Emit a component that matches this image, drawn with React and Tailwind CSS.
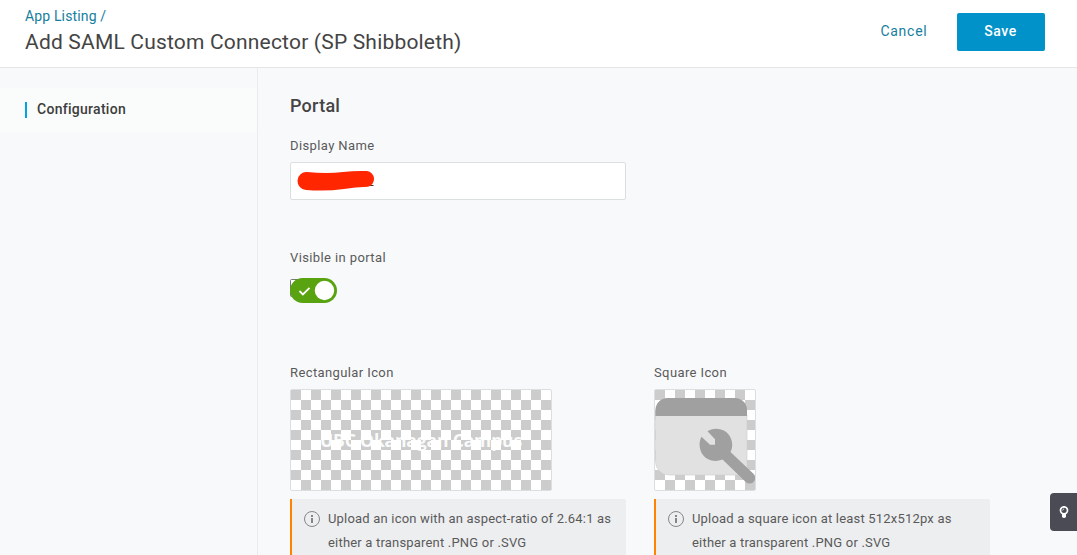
const checker =
  "bg-[repeating-conic-gradient(#ffffff_0_25%,#cccccc_0_50%)] bg-[length:20px_20px]";

function Header() {
  return (
    <header className="flex h-[68px] shrink-0 justify-between border-b border-[#e4e5e6] bg-white pr-8 pl-[25px]">
      <div className="pt-[6px]">
        <a className="block text-[14px] leading-5 tracking-[0.15px] text-[#167e9e]">App Listing /</a>
        <h1 className="pt-[2px] text-[21px] leading-7 tracking-[0.19px] text-[#444444]">
          Add SAML Custom Connector (SP Shibboleth)
        </h1>
      </div>
      <div className="flex items-start pt-[13px]">
        <button className="mr-[29.5px] h-[37px] text-[14px] tracking-[0.75px] text-[#167e9e]">Cancel</button>
        <button className="h-[38px] w-[88px] rounded-[2px] bg-[#0092c8] pr-[1px] pb-[2px] text-[14px] font-medium tracking-[0.6px] text-white">
          Save
        </button>
      </div>
    </header>
  );
}

function Label({ children }) {
  return <div className="h-5 text-[13px] leading-5 tracking-[0.39px] text-[#5a5a5a]">{children}</div>;
}

function Hint({ children }) {
  return (
    <div className="mt-2 flex h-[80px] w-[336px] rounded-r-[2px] border-l-2 border-[#ff8300] bg-[#edeef0] pt-2 pl-3">
      <svg className="mt-1 mr-2 h-4 w-4 shrink-0" viewBox="0 0 16 16">
        <circle cx="8" cy="8" r="7.5" fill="none" stroke="#858688" />
        <path d="M7 4h2v2H7zM7 7h2v5H7z" fill="#858688" />
      </svg>
      <p className="text-[13px] leading-6 tracking-[0.19px] text-[#5a5a5a]">{children}</p>
    </div>
  );
}

export default function App() {
  return (
    <div className="relative flex h-[555px] w-full flex-col overflow-hidden bg-[#f8f9fb] font-['Roboto',sans-serif]">
      <Header />
      <div className="flex min-h-0 flex-1">
        <nav className="w-[258px] shrink-0 border-r border-[#eaebed] pt-5">
          <div className="flex h-11 items-center bg-[#fafcfb] pl-[25px]">
            <span className="h-4 w-[2px] bg-[#00a7df]" />
            <span className="ml-[10px] pb-[2px] text-[14px] font-medium tracking-[0.28px] text-[#3d3d3d]">Configuration</span>
          </div>
        </nav>
        <main className="pt-[26px] pl-8">
          <h2 className="h-6 text-[18px] leading-6 font-medium tracking-[0.25px] text-[#444444]">Portal</h2>
          <div className="pt-[18px]">
            <Label>Display Name</Label>
            <div className="mt-[6px] h-[38px] w-[336px] rounded-[2px] border border-[#dcdfdf] bg-white">
              <svg className="h-9 w-[334px]" viewBox="290 163 334 36">
                <path d="M367 185.5h5.500" stroke="#333333" />
                <path
                  d="M306 172Q326 174 342 172Q354 170.500 366 171A8 8 0 0 1 367 186.700Q354 187 343 189Q325 191.500 305 190A9 9 0 0 1 306 172Z"
                  fill="#ff2600"
                />
              </svg>
            </div>
          </div>
          <div className="pt-[48px]">
            <Label>Visible in portal</Label>
            <svg className="mt-[10px] h-[26px] w-[48px]" viewBox="0 0 48 26">
              <rect x="0.5" y="1.500" width="14" height="17" rx="1" fill="#ffffff" stroke="#777777" />
              <rect x="0" y="0" width="47" height="25" rx="12.500" fill="#59a310" />
              <path d="M9.500 13l3.400 3.400L19.500 9.800" fill="none" stroke="#ffffff" strokeWidth="1.800" />
              <circle cx="34.500" cy="12.500" r="9.700" fill="#ffffff" />
            </svg>
          </div>
          <div className="flex pt-[59px]">
            <section className="w-[364px] shrink-0">
              <Label>Rectangular Icon</Label>
              <div className={"mt-[6px] flex h-[102px] w-[262px] items-center justify-center rounded-[2px] border border-[#dcdfdf] " + checker}>
                <span className="font-['Open_Sans',sans-serif] text-[17.5px] leading-6 font-bold tracking-[-0.15px] whitespace-nowrap text-white/90">
                  UBC Okanagan Campus
                </span>
              </div>
              <Hint>
                Upload an icon with an aspect-ratio of 2.64:1 as
                <br />
                either a transparent .PNG or .SVG
              </Hint>
            </section>
            <section>
              <Label>Square Icon</Label>
              <div className={"mt-[6px] h-[102px] w-[102px] rounded-[2px] border border-[#dcdfdf] " + checker}>
                <svg className="h-[100px] w-[100px]" viewBox="0 0 100 100">
                  <path d="M0.500 25H92V85H14A13.500 13.500 0 0 1 0.500 72Z" fill="#e1e1e1" stroke="#cfcfcf" strokeWidth="0.600" />
                  <path d="M0.500 26V20A12 12 0 0 1 12.500 8H80A12 12 0 0 1 92 20V26Z" fill="#a0a0a0" />
                  <path
                    d="M52.500 41.200C57 37.800 65 37.800 70.500 41.500C77 46.500 79 55 75.500 62L98.200 83.500A5.500 5.500 0 0 1 91 92.200L67.500 69.500C60 72.500 52 70.500 48 65C44 59.500 43.500 52 46.500 46.700L55 54.800H60V49.200Z"
                    fill="#a0a0a0"
                  />
                </svg>
              </div>
              <Hint>
                Upload a square icon at least 512x512px as
                <br />
                either a transparent .PNG or .SVG
              </Hint>
            </section>
          </div>
        </main>
      </div>
      <button className="absolute top-[493px] right-0 flex h-[38px] w-[27px] items-center justify-center rounded-l-[4px] bg-[#4a4b55] pl-[1px]">
        <svg className="h-3 w-[10px]" viewBox="0 0 10 12">
          <circle cx="5" cy="4.300" r="3.500" fill="none" stroke="#ffffff" strokeWidth="1.700" />
          <path d="M3 7h4v4q-2 1.800-4 0z" fill="#ffffff" />
          <path d="M3.600 4.500Q3.700 3 5.200 2.900" fill="none" stroke="#ffffff" strokeWidth="0.800" />
        </svg>
      </button>
    </div>
  );
}
